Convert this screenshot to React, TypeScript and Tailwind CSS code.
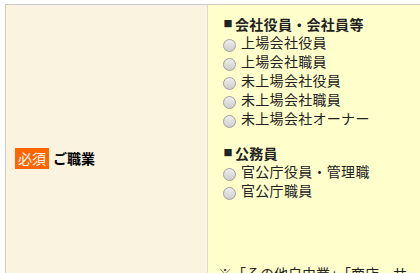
import React from "react";

const jp = { fontFamily: '"Noto Sans CJK JP", "Noto Sans", sans-serif' };

function Radio({ label }: { label: string }) {
  return (
    <div className="flex items-center h-[19px]">
      <span className="inline-block w-[13px] h-[13px] ml-[5px] mr-[5px] mt-[5px] rounded-full border border-[#a0a0a0] bg-linear-to-b from-[#efefef] to-[#cdcdcd] shrink-0" />
      <span className="whitespace-nowrap tracking-[0.3px]">{label}</span>
    </div>
  );
}

function Heading({ text }: { text: string }) {
  return (
    <div className="flex items-center h-[18px] font-bold whitespace-nowrap">
      <span className="inline-block w-[14px] ml-[3px] text-center text-[9px] leading-[18px] font-normal">■</span>
      <span className="tracking-[0.3px]">{text}</span>
    </div>
  );
}

export default function App() {
  return (
    <div className="w-[420px] h-[273px] overflow-hidden bg-white" style={jp}>
      <div className="pt-[4px] pl-[5px]">
        <div className="flex w-[700px] border-t border-l border-[#cbcbc3] text-[14px] leading-[19px] text-[#222]">
          <div className="w-[202px] shrink-0 bg-[#f9f3df] border-r border-[#dcdcd0] flex items-center pl-[9px] h-[306px]">
            <span className="bg-[#ff6600] text-white px-[3px] leading-[21px] h-[21px]">必須</span>
            <span className="font-bold ml-[4px] text-black">ご職業</span>
          </div>
          <div className="flex-1 bg-[#ffffcc] pl-[10px] pt-[10px]">
            <Heading text="会社役員・会社員等" />
            <Radio label="上場会社役員" />
            <Radio label="上場会社職員" />
            <Radio label="未上場会社役員" />
            <Radio label="未上場会社職員" />
            <Radio label="未上場会社オーナー" />
            <div className="h-[16px]" />
            <Heading text="公務員" />
            <Radio label="官公庁役員・管理職" />
            <Radio label="官公庁職員" />
            <div className="h-[64px]" />
            <div className="whitespace-nowrap">※「その他自由業」「商店・サービス業」等の方は、具体的にご記入ください。</div>
          </div>
        </div>
      </div>
    </div>
  );
}
